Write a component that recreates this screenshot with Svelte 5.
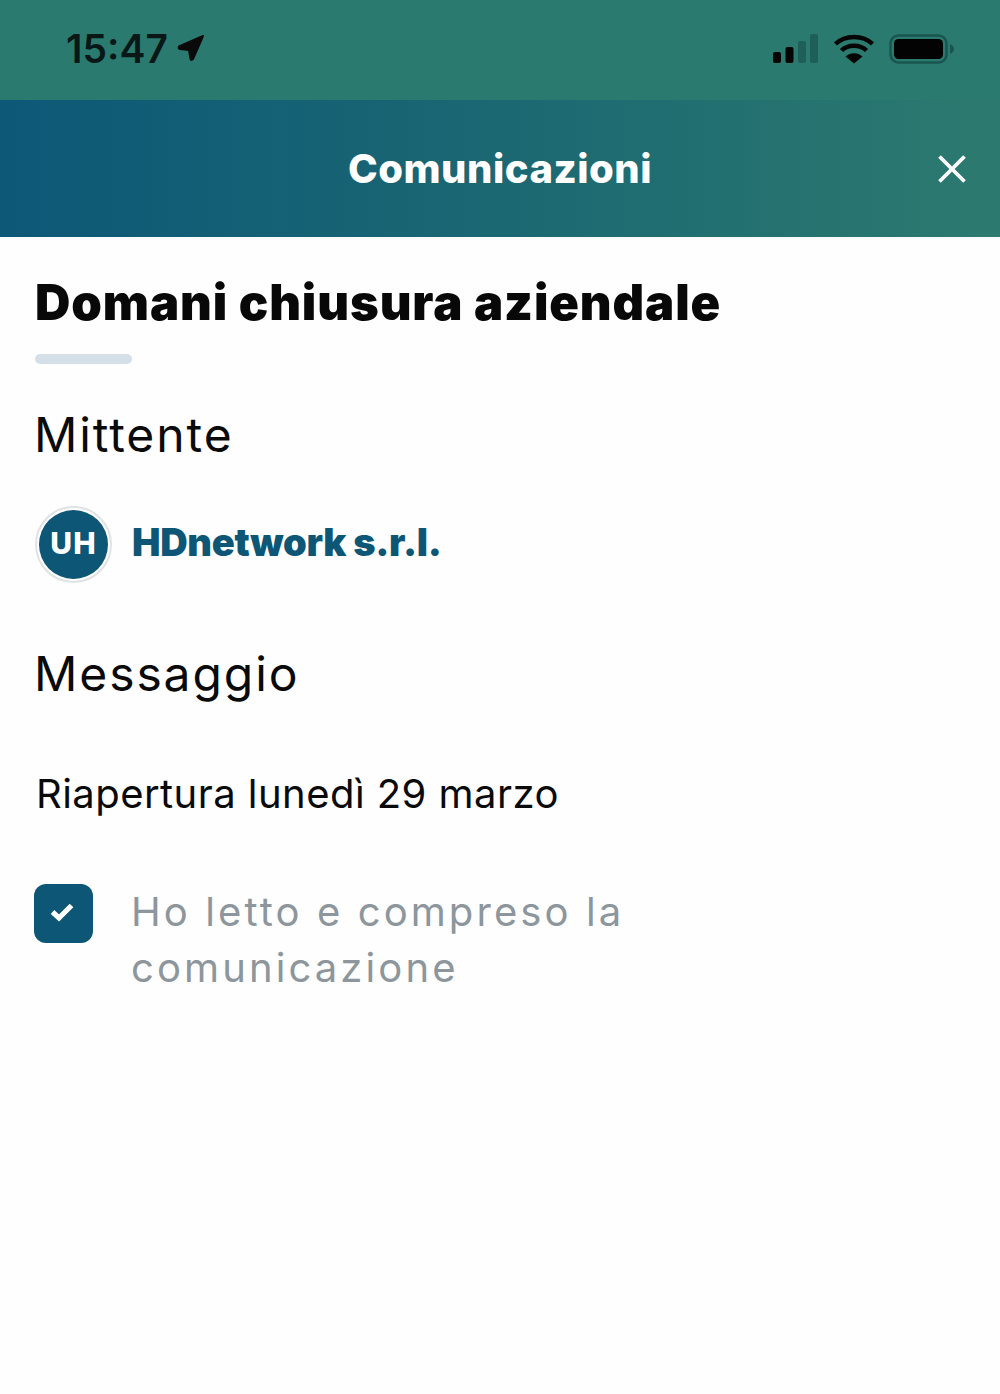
<script>
	const title = 'Domani chiusura aziendale';
	const sender = 'HDnetwork s.r.l.';
	const message = 'Riapertura lunedì 29 marzo';
</script>

<div class="page">
	<div class="status">
		<div class="time">
			<span>15:47</span>
			<svg width="30" height="30" viewBox="0 0 30 30" class="arrow">
				<path d="M27 3 L3 13.500 Q2 15.500 4 16 L13 17 L14.500 26 Q15.500 28 17 26 Z" fill="#0a0a0a" stroke="#0a0a0a" stroke-width="2" stroke-linejoin="round" />
			</svg>
		</div>
		<div class="icons">
			<svg width="46" height="30" viewBox="0 0 46 30">
				<rect x="0" y="18" width="8" height="11" rx="2" fill="#050505" />
				<rect x="12.500" y="13" width="8" height="16" rx="2" fill="#050505" />
				<rect x="25" y="7" width="8" height="22" rx="2" fill="#1f5f59" />
				<rect x="37" y="0" width="8" height="29" rx="2" fill="#1f5f59" />
			</svg>
			<svg width="40" height="30" viewBox="0 0 40 30">
				<path d="M1.500 10 C11 0.500 29 0.500 38.500 10 M7.500 16.500 C14 10 26 10 32.500 16.500" fill="none" stroke="#050505" stroke-width="4.500" />
				<path d="M20 29.500 L11.500 22.500 C16 18 24 18 28.500 22.500 Z" fill="#050505" />
			</svg>
			<svg width="66" height="30" viewBox="0 0 66 30">
				<rect x="1.500" y="1.500" width="56" height="27" rx="8" fill="none" stroke="#1a5550" stroke-width="2.500" />
				<rect x="5" y="5" width="49" height="20" rx="4.500" fill="#030303" />
				<path d="M61 10 Q65 12 65 15 Q65 18 61 20 Z" fill="#1a5550" />
			</svg>
		</div>
	</div>

	<header>
		<h1>Comunicazioni</h1>
		<button class="close" aria-label="Chiudi">
			<svg width="28" height="28" viewBox="0 0 28 28">
				<path d="M1.500 1.500 L26.500 26.500 M26.500 1.500 L1.500 26.500" stroke="#fff" stroke-width="3.800" fill="none" />
			</svg>
		</button>
	</header>

	<main>
		<h2>{title}</h2>
		<div class="rule"></div>

		<h3 class="mittente">Mittente</h3>
		<div class="sender">
			<div class="avatar"><span>UH</span></div>
			<strong>{sender}</strong>
		</div>

		<h3 class="messaggio">Messaggio</h3>
		<p class="text">{message}</p>

		<div class="confirm">
			<div class="check">
				<svg width="26" height="22" viewBox="0 0 26 22">
					<path d="M3.500 11 L10 17 L22.500 4.500" fill="none" stroke="#fff" stroke-width="5.200" />
				</svg>
			</div>
			<p>Ho letto e compreso la comunicazione</p>
		</div>
	</main>
</div>

<style>
	:global(body) {
		background: #fff;
	}

	.page {
		width: 1000px;
		height: 1394px;
		overflow: hidden;
		background: #fefefe;
		font-family: Inter, "Noto Sans", sans-serif;
		color: #0a0a0a;
	}

	.status {
		height: 100px;
		box-sizing: border-box;
		padding: 0 46px 4px 66px;
		background: #2b7a6f;
		display: flex;
		align-items: center;
		justify-content: space-between;
	}

	.time {
		display: flex;
		align-items: center;
		gap: 8px;
		font-size: 39px;
		font-weight: 600;
		color: #091716;
	}

	.icons {
		display: flex;
		align-items: center;
		gap: 15px;
		margin-top: 2px;
		margin-right: -1px;
	}

	header {
		height: 137px;
		position: relative;
		display: flex;
		align-items: center;
		justify-content: center;
		background: linear-gradient(90deg, #0c5877 0%, #1a6673 45%, #2c7a6f 100%);
	}

	h1 {
		margin: 0;
		font-size: 40px;
		font-weight: 800;
		letter-spacing: 0.5px;
		color: #fff;
	}

	.close {
		position: absolute;
		right: 34px;
		top: 55px;
		padding: 0;
		border: 0;
		background: none;
		line-height: 0;
	}

	main {
		padding: 37px 34px 0;
	}

	h2 {
		margin: 0 0 0 1px;
		font-size: 49px;
		line-height: 58px;
		font-weight: 900;
		letter-spacing: 0.88px;
		color: #080808;
	}

	.rule {
		width: 97px;
		height: 10px;
		margin: 22px 0 0 1px;
		border-radius: 5px;
		background: #d5dfe7;
	}

	h3 {
		margin: 0;
		font-size: 48px;
		line-height: 58px;
		font-weight: 400;
		letter-spacing: 1.9px;
	}

	.mittente {
		margin-top: 42px;
	}

	.sender {
		margin-top: 42px;
		display: flex;
		align-items: center;
		gap: 21px;
	}

	.avatar {
		width: 77px;
		height: 77px;
		margin-left: 1px;
		box-sizing: border-box;
		border-radius: 50%;
		border: 2px solid #dfe3e5;
		background: #fff;
		padding: 2px;
	}

	.avatar span {
		display: flex;
		align-items: center;
		justify-content: center;
		height: 100%;
		box-sizing: border-box;
		padding-bottom: 3px;
		border-radius: 50%;
		background: #0d5675;
		color: #fff;
		font-size: 30px;
		font-weight: 800;
		letter-spacing: 1px;
	}

	.sender strong {
		margin-left: -1px;
		padding-bottom: 5px;
		font-size: 38px;
		font-weight: 900;
		letter-spacing: -0.3px;
		color: #0d5675;
	}

	.messaggio {
		margin-top: 62px;
	}

	.text {
		margin: 68px 0 0 2px;
		font-size: 40px;
		line-height: 46px;
		font-weight: 400;
		letter-spacing: 0.45px;
	}

	.confirm {
		margin-top: 67px;
		display: flex;
		gap: 38px;
	}

	.check {
		width: 59px;
		height: 59px;
		flex: none;
		box-sizing: border-box;
		padding: 0 4px 4px 0;
		border-radius: 12px;
		background: #0d5675;
		display: flex;
		align-items: center;
		justify-content: center;
	}

	.confirm p {
		margin: 0;
		width: 560px;
		font-size: 40px;
		line-height: 56px;
		letter-spacing: 3.1px;
		font-weight: 400;
		color: #8c969c;
	}
</style>
